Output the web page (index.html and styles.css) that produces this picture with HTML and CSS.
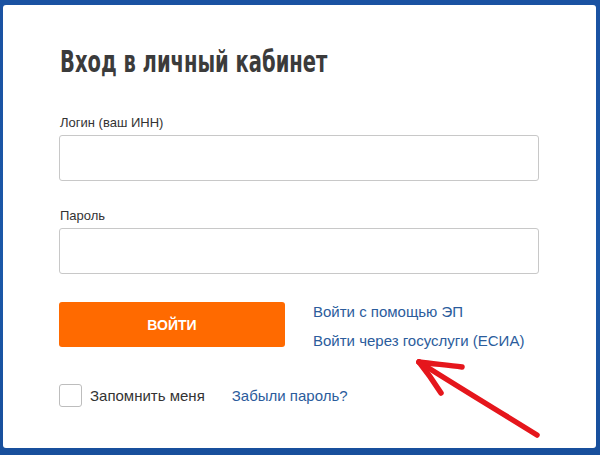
FILE: index.html
```html
<!DOCTYPE html>
<html lang="ru">
<head>
<meta charset="utf-8">
<title>Вход в личный кабинет</title>
<link rel="stylesheet" href="styles.css">
</head>
<body>
<div class="card">
  <h1 class="title"><span class="title-text">Вход в личный кабинет</span></h1>
  <label class="label">Логин (ваш ИНН)</label>
  <div class="input"></div>
  <label class="label label-second">Пароль</label>
  <div class="input"></div>
  <div class="actions">
    <button class="btn">ВОЙТИ</button>
    <div class="alt-links">
      <a class="link">Войти с помощью ЭП</a>
      <a class="link">Войти через госуслуги (ЕСИА)</a>
    </div>
  </div>
  <div class="remember-row">
    <span class="checkbox"></span>
    <span class="remember">Запомнить меня</span>
    <a class="link forgot">Забыли пароль?</a>
  </div>
</div>
<svg class="arrow" width="600" height="455" viewBox="0 0 600 455">
  <g fill="none" stroke="#e5161c" stroke-width="5.5" stroke-linecap="round" stroke-linejoin="round">
    <path d="M537 435 C 500 412, 460 388, 419 362"/>
    <path d="M419 362 C 434 364, 448 365, 462 367"/>
    <path d="M419 362 C 427 372, 434 382, 441 393"/>
  </g>
</svg>
</body>
</html>
```
FILE: styles.css
```css
html, body {
  margin: 0;
  padding: 0;
}
body {
  width: 600px;
  height: 455px;
  overflow: hidden;
  background: linear-gradient(180deg, #1a52a2 0%, #1b58a8 60%, #184f9c 100%);
  font-family: "Liberation Sans", Arial, sans-serif;
  position: relative;
}
.card {
  box-sizing: border-box;
  margin: 5px 0 0 3px;
  width: 593px;
  height: 443px;
  background: #fff;
  border-radius: 3px;
  padding: 38px 56px 0 56px;
  display: flex;
  flex-direction: column;
}
.title {
  margin: 0 0 36px 1px;
  font-family: "DejaVu Sans Condensed", "Liberation Sans Narrow", sans-serif;
  font-weight: bold;
  font-size: 31px;
  line-height: 36px;
  color: #3b3b3b;
  white-space: nowrap;
}
.title-text {
  display: inline-block;
  transform: scaleX(0.70);
  transform-origin: left center;
}
.label {
  display: block;
  font-size: 13px;
  line-height: 16px;
  color: #333;
  margin: 0 0 4px 1px;
}
.label-second {
  margin-top: 27px;
}
.input {
  box-sizing: border-box;
  width: 480px;
  height: 46px;
  border: 1px solid #c8c8c8;
  border-radius: 3px;
  background: #fff;
}
.actions {
  display: flex;
  align-items: flex-start;
  gap: 28px;
  margin-top: 28px;
}
.btn {
  width: 226px;
  height: 45px;
  border: 0;
  border-radius: 3px;
  background: #ff6a00;
  color: #fff;
  font-family: "Liberation Sans", Arial, sans-serif;
  font-weight: bold;
  font-size: 14px;
  padding: 0;
}
.alt-links {
  display: flex;
  flex-direction: column;
  gap: 9px;
}
.link {
  color: #2b5c9c;
  font-size: 15px;
  line-height: 20px;
  text-decoration: none;
}
.remember-row {
  display: flex;
  align-items: center;
  margin-top: 33px;
  height: 23px;
}
.checkbox {
  box-sizing: border-box;
  width: 23px;
  height: 23px;
  border: 1px solid #bdbdbd;
  border-radius: 3px;
}
.remember {
  margin-left: 8px;
  font-size: 15px;
  color: #333;
}
.forgot {
  margin-left: 27px;
  font-size: 15px;
}
.arrow {
  position: absolute;
  left: 0;
  top: 0;
}
```
